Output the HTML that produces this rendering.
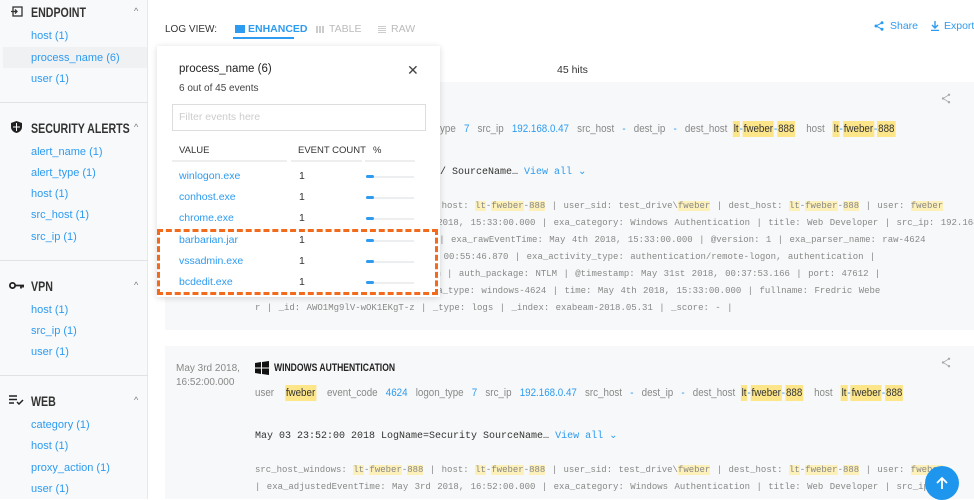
<!DOCTYPE html>
<html><head><meta charset="utf-8">
<style>
*{margin:0;padding:0;box-sizing:border-box}
body{width:974px;height:499px;overflow:hidden;background:#fff;font-family:"Liberation Sans",sans-serif;position:relative;color:#333}
.a{position:absolute;white-space:nowrap}
#side{position:absolute;left:0;top:0;width:148px;height:499px;background:#f8f9fa;border-right:1px solid #e8e8e8}
.hd{position:absolute;left:31px;white-space:nowrap;font-weight:bold;font-size:14px;color:#333;transform:scaleX(.76);transform-origin:left}
.car{position:absolute;left:134px;font-size:9px;color:#777}
.lk{position:absolute;left:31px;font-size:11px;color:#2d9bf0}
.div{position:absolute;left:0;width:148px;height:1px;background:#e2e2e2}
.card{position:absolute;left:165px;right:0;background:#f7f8f9}
.f{font-size:11px;color:#888;transform:scaleX(.89);transform-origin:left}
.b{color:#2d9bf0}
.y{background:#fde68a;color:#333;padding:2px 1px}
.m{font-family:"Liberation Mono",monospace;font-size:9px;color:#888;word-spacing:1px}
.my{background:#fdf0b8;color:#888}
.pop{position:absolute;left:157px;top:46px;width:283px;height:251px;background:#fff;box-shadow:0 1px 6px rgba(0,0,0,.15)}
.row{position:absolute;left:22px;font-size:10.5px;color:#2d9bf0}
.cnt{position:absolute;left:142px;font-size:10.5px;color:#333}
.bar{position:absolute;left:209px;width:48px;height:2px;background:#eceeef}
.bar i{position:absolute;left:0;top:-1px;width:8px;height:3px;background:#2d9bf0;border-radius:2px}
</style></head><body>

<div class="card" style="top:82px;height:248px"></div>
<div class="card" style="top:346px;height:153px"></div>

<div id="side">
  <svg class="a" style="left:11px;top:6px" width="12" height="11" viewBox="0 0 12 11"><rect x="2" y="1" width="9" height="9" fill="none" stroke="#333" stroke-width="1.3"/><path d="M0 5.5h6M4 3.5l2 2-2 2" stroke="#333" stroke-width="1.3" fill="none"/></svg>
  <div class="hd" style="top:4px">ENDPOINT</div><div class="car" style="top:6px">^</div>
  <div class="lk" style="top:30px">host (1)</div>
  <div class="a" style="left:3px;top:47px;width:144px;height:21px;background:#eff1f3"></div>
  <div class="lk" style="top:52px">process_name (6)</div>
  <div class="lk" style="top:73px">user (1)</div>
  <div class="div" style="top:102px"></div>
  <svg class="a" style="left:11px;top:121px" width="11" height="12" viewBox="0 0 11 12"><path d="M5.5 0L0 2v4c0 3 2.5 5.3 5.5 6 3-.7 5.5-3 5.5-6V2z" fill="#222"/><path d="M5.5 2v8M2 6h7" stroke="#fff" stroke-width="1"/></svg>
  <div class="hd" style="top:120px">SECURITY ALERTS</div><div class="car" style="top:122px">^</div>
  <div class="lk" style="top:146px">alert_name (1)</div>
  <div class="lk" style="top:167px">alert_type (1)</div>
  <div class="lk" style="top:188px">host (1)</div>
  <div class="lk" style="top:209px">src_host (1)</div>
  <div class="lk" style="top:231px">src_ip (1)</div>
  <div class="div" style="top:260px"></div>
  <svg class="a" style="left:9px;top:281px" width="15" height="9" viewBox="0 0 15 9"><circle cx="3.5" cy="4.5" r="2.6" fill="none" stroke="#222" stroke-width="1.8"/><path d="M6 4.5h9M12 4.5v3M14 4.5v2" stroke="#222" stroke-width="1.8"/></svg>
  <div class="hd" style="top:278px">VPN</div><div class="car" style="top:280px">^</div>
  <div class="lk" style="top:304px">host (1)</div>
  <div class="lk" style="top:325px">src_ip (1)</div>
  <div class="lk" style="top:346px">user (1)</div>
  <div class="div" style="top:375px"></div>
  <svg class="a" style="left:9px;top:395px" width="15" height="10" viewBox="0 0 15 10"><path d="M0 1h8M0 4.5h8M0 8h5M8 7l2 2 4-4" stroke="#222" stroke-width="1.5" fill="none"/></svg>
  <div class="hd" style="top:393px">WEB</div><div class="car" style="top:395px">^</div>
  <div class="lk" style="top:419px">category (1)</div>
  <div class="lk" style="top:440px">host (1)</div>
  <div class="lk" style="top:462px">proxy_action (1)</div>
  <div class="lk" style="top:483px">user (1)</div>
</div>

<div class="a" style="left:165px;top:24px;font-size:10px;color:#333">LOG VIEW:</div>
<div class="a" style="left:235px;top:25px;width:10px;height:8px;background:#2d9bf0"></div>
<div class="a" style="left:248px;top:23px;font-size:10.5px;font-weight:bold;color:#2d9bf0">ENHANCED</div>
<div class="a" style="left:233px;top:37px;width:61px;height:2px;background:#2d9bf0"></div>
<div class="a" style="left:316px;top:26px;width:9px;height:7px;background:repeating-linear-gradient(90deg,#ccc 0 2px,#fff 2px 3px)"></div>
<div class="a" style="left:329px;top:23px;font-size:10.5px;color:#bbb">TABLE</div>
<div class="a" style="left:378px;top:26px;width:8px;height:7px;background:repeating-linear-gradient(180deg,#ccc 0 1px,#fff 1px 2px)"></div>
<div class="a" style="left:391px;top:23px;font-size:10.5px;color:#bbb">RAW</div>

<svg class="a" style="left:874px;top:21px" width="10" height="10" viewBox="0 0 10 10"><circle cx="8" cy="1.8" r="1.5" fill="#2d9bf0"/><circle cx="2" cy="5" r="1.5" fill="#2d9bf0"/><circle cx="8" cy="8.2" r="1.5" fill="#2d9bf0"/><path d="M8 1.8L2 5l6 3.2" stroke="#2d9bf0" fill="none"/></svg>
<div class="a" style="left:890px;top:20px;font-size:10.5px;color:#2d9bf0">Share</div>
<svg class="a" style="left:931px;top:21px" width="8" height="10" viewBox="0 0 8 10"><path d="M4 0v6M1 4l3 3 3-3M0 9.5h8" stroke="#2d9bf0" stroke-width="1.4" fill="none"/></svg>
<div class="a" style="left:944px;top:20px;font-size:10.5px;color:#2d9bf0">Export</div>
<div class="a" style="left:557px;top:64px;font-size:10.5px;color:#333">45 hits</div>

<!-- card 1 -->
<svg class="a" style="left:941px;top:93px" width="10" height="11" viewBox="0 0 10 11"><circle cx="8" cy="1.8" r="1.2" fill="#aaa"/><circle cx="2" cy="5.5" r="1.2" fill="#aaa"/><circle cx="8" cy="9.2" r="1.2" fill="#aaa"/><path d="M8 1.8L2 5.5l6 3.7" stroke="#aaa" stroke-width=".8" fill="none"/></svg>
<div class="a f" style="left:440px;top:123px">ype&nbsp;&nbsp; <span class="b">7</span>&nbsp;&nbsp; src_ip&nbsp;&nbsp; <span class="b">192.168.0.47</span>&nbsp;&nbsp; src_host&nbsp;&nbsp; <span class="b">-</span>&nbsp;&nbsp; dest_ip&nbsp;&nbsp; <span class="b">-</span>&nbsp;&nbsp; dest_host&nbsp; <span class="y">lt</span><span class="b">-</span><span class="y">fweber</span><span class="b">-</span><span class="y">888</span>&nbsp;&nbsp;&nbsp; host&nbsp;&nbsp; <span class="y">lt</span><span class="b">-</span><span class="y">fweber</span><span class="b">-</span><span class="y">888</span></div>
<div class="a" style="left:440px;top:166px;font-family:'Liberation Mono',monospace;font-size:10px;color:#333">/ SourceName… <span class="b">View all ⌄</span></div>
<div class="a m" style="left:255px;top:201px">src_host_windows: lt-fweber-888 | host: <span class="my">lt</span>-<span class="my">fweber</span>-<span class="my">888</span> | user_sid: test_drive\<span class="my">fweber</span> | dest_host: <span class="my">lt</span>-<span class="my">fweber</span>-<span class="my">888</span> | user: <span class="my">fweber</span></div>
<div class="a m" style="left:255px;top:218px">| exa_adjustedEventTime: May 4th 2018, 15:33:00.000 | exa_category: Windows Authentication | title: Web Developer | src_ip: 192.168.</div>
<div class="a m" style="left:255px;top:235px">| src_port: 0 | event_code: 4624 | exa_rawEventTime: May 4th 2018, 15:33:00.000 | @version: 1 | exa_parser_name: raw-4624</div>
<div class="a m" style="left:255px;top:252px">| exa_ingest_time: May 31st 2018, 00:55:46.870 | exa_activity_type: authentication/remote-logon, authentication |</div>
<div class="a m" style="left:255px;top:269px">| event_category: operating-system | auth_package: NTLM | @timestamp: May 31st 2018, 00:37:53.166 | port: 47612 |</div>
<div class="a m" style="left:255px;top:286px">| src_ip_addr: 10.14.33.153 | data_type: windows-4624 | time: May 4th 2018, 15:33:00.000 | fullname: Fredric Webe</div>
<div class="a m" style="left:255px;top:303px">r | _id: AWO1Mg9lV-wOK1EKgT-z | _type: logs | _index: exabeam-2018.05.31 | _score: - |</div>

<!-- card 2 -->
<div class="a" style="left:176px;top:362px;font-size:10px;color:#888;line-height:14px">May 3rd 2018,<br>16:52:00.000</div>
<svg class="a" style="left:255px;top:361px" width="14" height="14" viewBox="0 0 14 14"><path d="M0 2l6-1v5.5H0zM7 1l7-1v6.5H7zM0 7.5h6V13l-6-1zM7 7.5h7V14l-7-1z" fill="#111"/></svg>
<div class="a" style="left:274px;top:362px;font-weight:bold;font-size:11px;color:#222;transform:scaleX(.78);transform-origin:left">WINDOWS AUTHENTICATION</div>
<div class="a f" style="left:255px;top:387px">user&nbsp;&nbsp;&nbsp; <span class="y">fweber</span>&nbsp;&nbsp;&nbsp; event_code&nbsp;&nbsp; <span class="b">4624</span>&nbsp;&nbsp; logon_type&nbsp;&nbsp; <span class="b">7</span>&nbsp;&nbsp; src_ip&nbsp;&nbsp; <span class="b">192.168.0.47</span>&nbsp;&nbsp; src_host&nbsp;&nbsp; <span class="b">-</span>&nbsp;&nbsp; dest_ip&nbsp;&nbsp; <span class="b">-</span>&nbsp;&nbsp; dest_host&nbsp; <span class="y">lt</span><span class="b">-</span><span class="y">fweber</span><span class="b">-</span><span class="y">888</span>&nbsp;&nbsp;&nbsp; host&nbsp;&nbsp; <span class="y">lt</span><span class="b">-</span><span class="y">fweber</span><span class="b">-</span><span class="y">888</span></div>
<div class="a" style="left:255px;top:430px;font-family:'Liberation Mono',monospace;font-size:10px;color:#333">May 03 23:52:00 2018 LogName=Security SourceName… <span class="b">View all ⌄</span></div>
<svg class="a" style="left:941px;top:357px" width="10" height="11" viewBox="0 0 10 11"><circle cx="8" cy="1.8" r="1.2" fill="#aaa"/><circle cx="2" cy="5.5" r="1.2" fill="#aaa"/><circle cx="8" cy="9.2" r="1.2" fill="#aaa"/><path d="M8 1.8L2 5.5l6 3.7" stroke="#aaa" stroke-width=".8" fill="none"/></svg>
<div class="a m" style="left:255px;top:465px">src_host_windows: <span class="my">lt</span>-<span class="my">fweber</span>-<span class="my">888</span> | host: <span class="my">lt</span>-<span class="my">fweber</span>-<span class="my">888</span> | user_sid: test_drive\<span class="my">fweber</span> | dest_host: <span class="my">lt</span>-<span class="my">fweber</span>-<span class="my">888</span> | user: <span class="my">fweber</span></div>
<div class="a m" style="left:255px;top:482px">| exa_adjustedEventTime: May 3rd 2018, 16:52:00.000 | exa_category: Windows Authentication | title: Web Developer | src_ip: 192</div>
<div class="a" style="left:925px;top:466px;width:34px;height:34px;border-radius:50%;background:#1e96ee"></div>
<svg class="a" style="left:935px;top:476px" width="14" height="14" viewBox="0 0 14 14"><path d="M7 13V2M2 7l5-5 5 5" stroke="#fff" stroke-width="1.8" fill="none"/></svg>

<!-- popup -->
<div class="pop">
  <div class="a" style="left:22px;top:17px;font-size:11.5px;color:#222">process_name (6)</div>
  <div class="a" style="left:250px;top:16px;font-size:14px;color:#444">✕</div>
  <div class="a" style="left:22px;top:37px;font-size:10px;color:#444">6 out of 45 events</div>
  <div class="a" style="left:15px;top:58px;width:254px;height:27px;border:1px solid #ddd"></div>
  <div class="a" style="left:22px;top:65px;font-size:10.5px;color:#ccc">Filter events here</div>
  <div class="a" style="left:22px;top:99px;font-size:9.5px;color:#333">VALUE</div>
  <div class="a" style="left:141px;top:99px;font-size:9.5px;color:#333">EVENT COUNT</div>
  <div class="a" style="left:216px;top:99px;font-size:9.5px;color:#333">%</div>
  <div class="a" style="left:15px;top:114px;width:115px;height:2px;background:#eee"></div>
  <div class="a" style="left:134px;top:114px;width:71px;height:2px;background:#eee"></div>
  <div class="a" style="left:208px;top:114px;width:50px;height:2px;background:#eee"></div>
  <div class="row" style="top:124px">winlogon.exe</div><div class="cnt" style="top:124px">1</div><div class="bar" style="top:130px"><i></i></div>
  <div class="row" style="top:145px">conhost.exe</div><div class="cnt" style="top:145px">1</div><div class="bar" style="top:151px"><i></i></div>
  <div class="row" style="top:166px">chrome.exe</div><div class="cnt" style="top:166px">1</div><div class="bar" style="top:172px"><i></i></div>
  <div class="row" style="top:188px">barbarian.jar</div><div class="cnt" style="top:188px">1</div><div class="bar" style="top:194px"><i></i></div>
  <div class="row" style="top:209px">vssadmin.exe</div><div class="cnt" style="top:209px">1</div><div class="bar" style="top:215px"><i></i></div>
  <div class="row" style="top:230px">bcdedit.exe</div><div class="cnt" style="top:230px">1</div><div class="bar" style="top:236px"><i></i></div>
</div>
<div class="a" style="left:157px;top:229px;width:281px;height:66px;border:3px dashed #f26a1b"></div>

</body></html>
